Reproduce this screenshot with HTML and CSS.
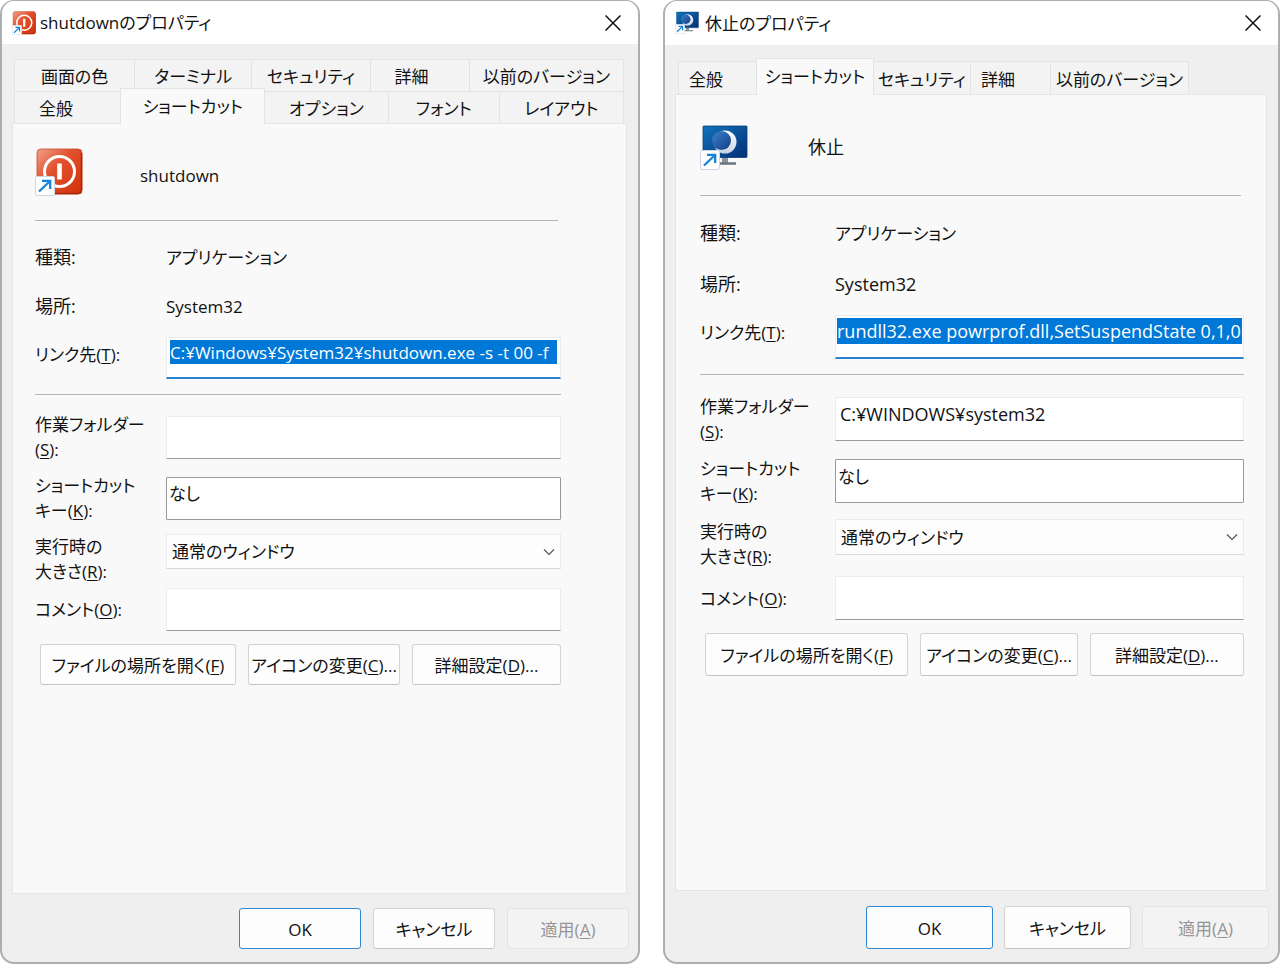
FILE: index.html
```
<!DOCTYPE html>
<html lang="ja">
<head>
<meta charset="utf-8">
<title>プロパティ</title>
<link rel="stylesheet" href="styles.css">
</head>
<body>
<svg class="defs" aria-hidden="true">
  <defs>
    <linearGradient id="red" x1="0" y1="0" x2="1" y2="1">
      <stop offset="0" stop-color="#f0a08c"/><stop offset=".4" stop-color="#e2522f"/><stop offset="1" stop-color="#cf3208"/>
    </linearGradient>
    <linearGradient id="screen" x1="0" y1="0" x2="1" y2="1">
      <stop offset="0" stop-color="#0f74bd"/><stop offset="1" stop-color="#052f74"/>
    </linearGradient>
    <linearGradient id="moon" x1="0" y1="0" x2="0" y2="1">
      <stop offset="0" stop-color="#ffffff"/><stop offset="1" stop-color="#c9d3df"/>
    </linearGradient>
    <linearGradient id="dark" x1="0" y1="0" x2="1" y2="1">
      <stop offset="0" stop-color="#3f80c8"/><stop offset="1" stop-color="#0f3f88"/>
    </linearGradient>
    <symbol id="arrow" viewBox="0 0 20 20">
      <rect x=".5" y=".5" width="19" height="19" rx="1.5" fill="#fff" stroke="#cdd6e2"/>
      <path d="M4 15.500 14.500 5.500M7 4.800h8.200V13" fill="none" stroke="#1683d8" stroke-width="2.300"/>
    </symbol>
    <symbol id="power" viewBox="0 0 48 48">
      <rect x="2" y="1" width="45" height="45" rx="4" fill="url(#red)" stroke="#c94a2c" stroke-width=".8"/>
      <path d="M46.500 5v37q0 3.500-3.500 3.500H20" fill="none" stroke="#a82a08" stroke-width="1.500"/>
      <circle cx="24.500" cy="23.500" r="15" fill="none" stroke="#fff" stroke-width="3"/>
      <path d="M24.500 15.500v16" stroke="#fff" stroke-width="4.600"/>
      <use href="#arrow" x="0" y="28" width="20" height="20"/>
    </symbol>
    <symbol id="sleep" viewBox="0 0 48 48">
      <path d="M22 33h6v6h-6z" fill="#8c959e"/>
      <path d="M17 39.500h19" stroke="#6b747d" stroke-width="2.400"/>
      <rect x="3" y="2" width="44" height="31.500" rx=".8" fill="url(#screen)" stroke="#0a3f7c" stroke-width=".8"/>
      <circle cx="25" cy="18" r="11.500" fill="url(#moon)"/>
      <circle cx="21.500" cy="16.500" r="9.500" fill="url(#dark)"/>
      <use href="#arrow" x="0" y="26" width="20" height="20"/>
    </symbol>
  </defs>
</svg>

<main class="desktop">
  <section class="window window-shutdown" aria-label="shutdownのプロパティ">
    <header class="titlebar">
      <svg class="title-icon"><use href="#power"/></svg>
      <h1 class="title">shutdownのプロパティ</h1>
      <button class="close" type="button" aria-label="閉じる"><svg viewBox="0 0 16 16"><path d="M.5.5l15 15M15.500.5l-15 15"/></svg></button>
    </header>
    <nav class="tabs" role="tablist">
      <div class="tab-row row-back">
        <button class="tab" role="tab">画面の色</button>
        <button class="tab" role="tab">ターミナル</button>
        <button class="tab" role="tab">セキュリティ</button>
        <button class="tab tab-start" role="tab">詳細</button>
        <button class="tab" role="tab">以前のバージョン</button>
      </div>
      <div class="tab-row row-front">
        <button class="tab tab-start" role="tab">全般</button>
        <button class="tab selected" role="tab" aria-selected="true">ショートカット</button>
        <button class="tab" role="tab">オプション</button>
        <button class="tab" role="tab">フォント</button>
        <button class="tab" role="tab">レイアウト</button>
      </div>
    </nav>
    <form class="panel">
      <div class="head"><svg class="big-icon"><use href="#power"/></svg><span class="name">shutdown</span></div>
      <hr class="rule">
      <div class="row info"><span class="label">種類:</span><span>アプリケーション</span></div>
      <div class="row info"><span class="label">場所:</span><span class="place">System32</span></div>
      <div class="row target"><label class="label" for="t1">リンク先(<u>T</u>):</label><input class="box focused" id="t1" value="C:¥Windows¥System32¥shutdown.exe -s -t 00 -f"></div>
      <hr class="rule">
      <div class="row folder"><label class="label" for="s1">作業フォルダー<br>(<u>S</u>):</label><input class="box" id="s1"></div>
      <div class="row key"><label class="label" for="k1">ショートカット<br>キー(<u>K</u>):</label><input class="box outlined" id="k1" value="なし"></div>
      <div class="row run"><label class="label" for="r1">実行時の<br>大きさ(<u>R</u>):</label><div class="pick"><select class="select" id="r1"><option>通常のウィンドウ</option></select><svg class="chevron" viewBox="0 0 12 8"><path d="M1 1.500l5 5 5-5"/></svg></div></div>
      <div class="row comment"><label class="label" for="o1">コメント(<u>O</u>):</label><input class="box" id="o1"></div>
      <div class="actions">
        <button class="button" type="button">ファイルの場所を開く(<u>F</u>)</button>
        <button class="button" type="button">アイコンの変更(<u>C</u>)...</button>
        <button class="button" type="button">詳細設定(<u>D</u>)...</button>
      </div>
    </form>
    <footer class="footer">
      <button class="button default" type="button">OK</button>
      <button class="button" type="button">キャンセル</button>
      <button class="button" type="button" disabled>適用(<u>A</u>)</button>
    </footer>
  </section>

  <section class="window window-sleep" aria-label="休止のプロパティ">
    <header class="titlebar">
      <svg class="title-icon"><use href="#sleep"/></svg>
      <h1 class="title">休止のプロパティ</h1>
      <button class="close" type="button" aria-label="閉じる"><svg viewBox="0 0 16 16"><path d="M.5.5l15 15M15.500.5l-15 15"/></svg></button>
    </header>
    <nav class="tabs" role="tablist">
      <div class="tab-row row-single">
        <button class="tab tab-start" role="tab">全般</button>
        <button class="tab selected" role="tab" aria-selected="true">ショートカット</button>
        <button class="tab" role="tab">セキュリティ</button>
        <button class="tab tab-start" role="tab">詳細</button>
        <button class="tab" role="tab">以前のバージョン</button>
      </div>
    </nav>
    <form class="panel">
      <div class="head"><svg class="big-icon"><use href="#sleep"/></svg><span class="name">休止</span></div>
      <hr class="rule">
      <div class="row info"><span class="label">種類:</span><span>アプリケーション</span></div>
      <div class="row info"><span class="label">場所:</span><span class="place">System32</span></div>
      <div class="row target"><label class="label" for="t2">リンク先(<u>T</u>):</label><input class="box focused" id="t2" value="rundll32.exe powrprof.dll,SetSuspendState 0,1,0"></div>
      <hr class="rule">
      <div class="row folder"><label class="label" for="s2">作業フォルダー<br>(<u>S</u>):</label><input class="box" id="s2" value="C:¥WINDOWS¥system32"></div>
      <div class="row key"><label class="label" for="k2">ショートカット<br>キー(<u>K</u>):</label><input class="box outlined" id="k2" value="なし"></div>
      <div class="row run"><label class="label" for="r2">実行時の<br>大きさ(<u>R</u>):</label><div class="pick"><select class="select" id="r2"><option>通常のウィンドウ</option></select><svg class="chevron" viewBox="0 0 12 8"><path d="M1 1.500l5 5 5-5"/></svg></div></div>
      <div class="row comment"><label class="label" for="o2">コメント(<u>O</u>):</label><input class="box" id="o2"></div>
      <div class="actions">
        <button class="button" type="button">ファイルの場所を開く(<u>F</u>)</button>
        <button class="button" type="button">アイコンの変更(<u>C</u>)...</button>
        <button class="button" type="button">詳細設定(<u>D</u>)...</button>
      </div>
    </form>
    <footer class="footer">
      <button class="button default" type="button">OK</button>
      <button class="button" type="button">キャンセル</button>
      <button class="button" type="button" disabled>適用(<u>A</u>)</button>
    </footer>
  </section>
</main>
</body>
</html>
```

FILE: styles.css
```
* { box-sizing: border-box; }

body {
  margin: 0;
  background: #fff;
  color: #111;
  font: 400 17px/25px "Open Sans", "Noto Sans CJK JP", sans-serif;
  font-feature-settings: "palt";
}

button, input, select {
  margin: 0;
  padding: 0;
  border: 0;
  color: inherit;
  font: inherit;
  font-feature-settings: inherit;
}

u { text-underline-offset: 2px; text-decoration-thickness: 1px; }

.defs { position: absolute; width: 0; height: 0; }

.desktop {
  display: grid;
  grid-template-columns: 640fr 617fr;
  gap: 23px;
  min-height: 100vh;
}

.window {
  display: flex;
  flex-direction: column;
  min-width: 0;
  border: 2px solid #aeaeae;
  border-top-width: 1px;
  border-radius: 14px;
  background: #efefef;
  overflow: hidden;
}

.titlebar {
  display: flex;
  align-items: center;
  height: 43px;
  padding: 0 15px 0 10px;
  background: #fff;
}
.title-icon { width: 24px; height: 24px; }
.title { flex: 1; margin: 0 0 0 4px; font: inherit; }
.close { width: 18px; height: 24px; background: none; }
.close svg { display: block; width: 16px; height: 16px; }
.close path { stroke: #111; stroke-width: 1.5; }

.tabs { padding: 15px 14px 0 12px; }
.tab-row { display: grid; }
.row-back { grid-template-columns: 120fr 117fr 118fr 99fr 155fr; }
.row-front { grid-template-columns: 106fr 144fr 123fr 111fr 125fr; }
.row-single { grid-template-columns: 78fr 116fr 97fr 80fr 138fr 77fr; }
.tab {
  height: 32px;
  padding-top: 2px;
  border: 1px solid #e3e3e3;
  border-width: 1px 0 0 1px;
  background: #f3f3f3;
  white-space: nowrap;
}
.tab:last-child { border-right-width: 1px; }
.tab-start { padding-left: 24px; text-align: left; }
.tab.selected {
  height: 36px;
  margin: -3px -1px -1px 0;
  padding-bottom: 3px;
  border-right-width: 1px;
  background: #f9f9f9;
  z-index: 1;
}

.panel {
  flex: 1;
  margin: 0 11px 0 10px;
  padding: 24px 65px 0 22px;
  border: 1px solid #e5e5e5;
  background: #f9f9f9;
}

.head { display: flex; align-items: center; height: 72px; }
.big-icon { width: 48px; height: 48px; margin-bottom: 24px; }
.name { margin: 0 0 18px 57px; }
.rule { height: 1px; margin: 0; border: 0; background: #b4b4b4; }

.row { display: grid; grid-template-columns: 131px 1fr; align-items: center; }
.label { white-space: nowrap; }
.info { height: 49px; }
.info .label { font-size: 18px; }
.head + .rule { margin: 0 3px 12px 0; }
.target { align-items: start; margin: 6px 0 15px; }
.target .label { padding-top: 5px; }
.folder { margin-top: 17px; }
.key { margin-top: 11px; }
.run { align-items: start; margin-top: 11px; }
.comment { margin-top: 4px; }

.box {
  width: 100%;
  height: 43px;
  padding: 2px 4px 13px;
  border: 1px solid #ececec;
  border-bottom-color: #9a9a9a;
  background: #fff;
  outline: 0;
}
.focused {
  height: 42px;
  padding-right: 3px;
  padding-left: 3px;
  border-bottom: 2px solid #2a80d2;
  background: linear-gradient(#0078d7, #0078d7) content-box, #fff;
  color: #fff;
}
.outlined { padding-left: 2px; border-color: #9a9a9a; border-radius: 1px; }

.pick { position: relative; }
.select {
  display: block;
  width: 100%;
  height: 35px;
  padding: 0 30px 0 5px;
  border: 1px solid #ececec;
  border-bottom-color: #d8d8d8;
  background: #fdfdfd;
  appearance: none;
}
.chevron { position: absolute; top: 14px; right: 6px; width: 12px; height: 8px; }
.chevron path { fill: none; stroke: #555; stroke-width: 1.2; }

.button {
  height: 41px;
  padding-top: 1px;
  border: 1px solid #d3d3d3;
  border-bottom-color: #c4c4c4;
  border-radius: 3px;
  background: #fdfdfd;
  white-space: nowrap;
}
.button.default { border-color: #2f87d0; }
.button:disabled { border-color: #e3e3e3; background: #f3f3f3; color: #959595; }

.actions {
  display: grid;
  grid-template-columns: 196fr 152fr 149fr;
  gap: 12px;
  margin-top: 13px;
  padding-left: 5px;
}

.footer {
  display: grid;
  grid-template-columns: repeat(3, 122px);
  justify-content: end;
  gap: 12px;
  padding: 14px 9px 13px;
}

.window-sleep .titlebar { height: 44px; }
.window-sleep .title { margin-left: 6px; }
.window-sleep .tabs { padding: 16px 12px 0 13px; }
.window-sleep .tab { height: 33px; }
.window-sleep .tab.selected { height: 37px; }
.window-sleep .tab-start { padding-left: 10px; }
.window-sleep .panel { padding: 29px 22px 0 24px; }
.window-sleep .head { height: 71px; }
.window-sleep .name { margin: 0 0 24px 60px; font-size: 18px; }
.window-sleep .row { grid-template-columns: 135px 1fr; }
.window-sleep .info { height: 51px; }
.window-sleep .place { font-size: 18px; }
.window-sleep .head + .rule { margin-bottom: 12px; }
.window-sleep .target { margin-top: 5px; }
.window-sleep .folder { margin-top: 19px; }
.window-sleep .key { margin-top: 12px; }
.window-sleep .run { margin-top: 13px; }
.window-sleep .comment { margin-top: 7px; }
.window-sleep .box { height: 44px; }
.window-sleep .folder .box { font-size: 18px; }
.window-sleep .focused { padding-right: 1px; padding-left: 1px; font-size: 18px; }
.window-sleep .select { height: 36px; }
.window-sleep .button { height: 43px; }
.window-sleep .actions { grid-template-columns: 203fr 157fr 154fr; }
.window-sleep .footer { grid-template-columns: repeat(3, 127px); gap: 11px; padding-top: 15px; }
```
